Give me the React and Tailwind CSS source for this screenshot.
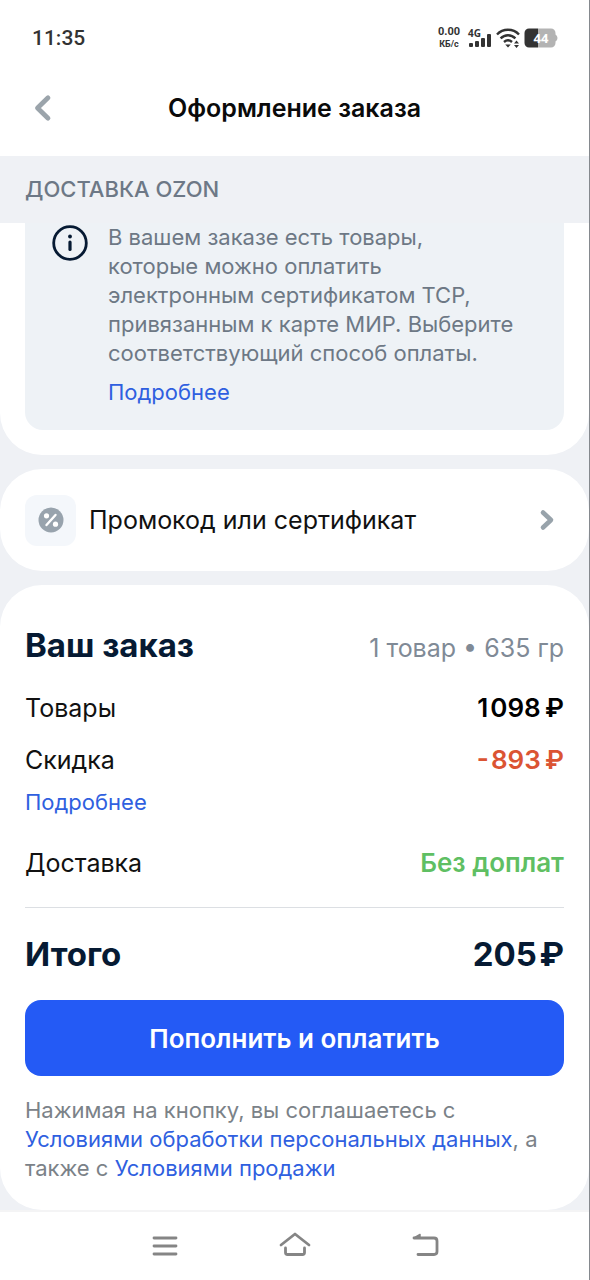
import React from "react";

function StatusBar() {
  return (
    <div className="flex h-[76px] items-center justify-between pl-8 pr-[31px] text-[#333]">
      <span className="font-['Roboto',sans-serif] text-[21px] font-medium leading-6">11:35</span>
      <div className="flex items-center gap-2">
        <div className="flex flex-col items-center font-['Roboto',sans-serif] font-bold leading-3">
          <span className="text-[11px]">0.00</span>
          <span className="text-[9px]">КБ/с</span>
        </div>
        <div className="relative h-5 w-6">
          <span className="absolute left-0 top-0 font-['Open_Sans',sans-serif] text-[10px] font-bold leading-[10px]">4G</span>
          <svg className="h-5 w-6" viewBox="0 0 24 20" fill="currentColor">
            <rect x="1" y="15" width="4" height="4" rx="1" />
            <rect x="7" y="13" width="4" height="6" rx="1" />
            <rect x="13" y="10" width="4" height="9" rx="1" />
            <rect x="19" y="6" width="4" height="13" rx="1" />
          </svg>
        </div>
        <svg className="-ml-1 h-5 w-6" viewBox="0 0 24 20" fill="none" stroke="currentColor" strokeWidth="2.4">
          <path d="M1 6.5C7 .2 17 .2 23 6.5" />
          <path d="M4.6 10.4c4.2-4.2 10.6-4.2 14.8 0" />
          <path d="M8 14c2.4-2.2 5.6-2.2 8 0" />
          <path d="M9.2 16.5h5.600L12 19.600z" fill="currentColor" stroke="none" />
          <path d="M18 15.500l2.500-3 2.500 3zM18 17l2.500 3 2.500-3z" fill="currentColor" stroke="none" />
        </svg>
        <div className="relative -ml-1 flex h-5 w-[34px] items-center justify-center">
          <svg className="absolute inset-0 h-5 w-[34px]" viewBox="0 0 34 20">
            <path d="M5 .5h9v19H5A4.500 4.500 0 0 1 .5 15V5A4.500 4.500 0 0 1 5 .5z" fill="#333" />
            <path d="M14 .5h13A4.500 4.500 0 0 1 31.500 5v1.500q2 1 2 3.500t-2 3.500V15a4.500 4.500 0 0 1-4.500 4.500H14z" fill="#b3b3b3" />
          </svg>
          <span className="relative font-['Open_Sans',sans-serif] text-[13px] font-bold leading-4 text-white">44</span>
        </div>
      </div>
    </div>
  );
}

function Header() {
  return (
    <header className="grid h-20 grid-cols-[64px_1fr_64px] items-start">
      <button type="button" aria-label="Назад" className="flex h-16 items-center justify-center pl-[22px]">
        <svg className="h-7 w-5" viewBox="0 0 20 28" fill="none" stroke="#9ba4ab" strokeWidth="4.8" strokeLinecap="round" strokeLinejoin="round">
          <path d="M15 3.800L4.500 14 15 24.200" />
        </svg>
      </button>
      <h1 className="text-center text-[25px] font-semibold leading-[64px] text-[#0a0a0a]">Оформление заказа</h1>
    </header>
  );
}

function Row({ label, children, className }) {
  return (
    <div className="flex items-center justify-between leading-8">
      <span className="text-[25px] text-[#111]">{label}</span>
      <span className={`text-[26px] font-semibold ${className}`}>{children}</span>
    </div>
  );
}

function Notice() {
  return (
    <section className="rounded-b-[42px] bg-white px-[25px] pb-[25px]">
      <div className="flex gap-5 rounded-b-[18px] bg-[#eef2f6] pb-[23px] pl-[27px] pr-8">
        <svg className="mt-0.5 h-9 w-9 shrink-0" viewBox="0 0 36 36" fill="none" stroke="#061a33">
          <circle cx="18" cy="18" r="16.300" strokeWidth="2.800" />
          <path d="M18 17v7.500" strokeWidth="3.200" strokeLinecap="round" />
          <circle cx="18" cy="11.500" r="1.900" fill="#061a33" stroke="none" />
        </svg>
        <div className="text-[22px] leading-[29px]">
          <p className="text-[#6d7885]">
            В вашем заказе есть товары,
            <br />
            которые можно оплатить
            <br />
            электронным сертификатом ТСР,
            <br />
            привязанным к карте МИР. Выберите
            <br />
            соответствующий способ оплаты.
          </p>
          <a href="#details" className="mt-[10px] block text-[#2f5fe0]">Подробнее</a>
        </div>
      </div>
    </section>
  );
}

function PromoCode() {
  return (
    <button type="button" className="flex h-[102px] w-full items-center rounded-[42px] bg-white px-[25px] text-left">
      <span className="flex h-[51px] w-[51px] items-center justify-center rounded-[12px] bg-[#f4f7fb]">
        <svg className="h-[26px] w-[26px]" viewBox="0 0 26 26">
          <circle cx="13" cy="13" r="12.500" fill="#98a3ad" />
          <path d="M8.500 18L17.500 8" stroke="#fff" strokeWidth="2.400" strokeLinecap="round" />
          <circle cx="8.500" cy="8.800" r="2.600" fill="#fff" />
          <circle cx="17.500" cy="17.200" r="2.600" fill="#fff" />
        </svg>
      </span>
      <span className="ml-[13px] flex-1 text-[25px] leading-8 text-[#111]">Промокод или сертификат</span>
      <svg className="mr-2 h-[22px] w-[18px]" viewBox="0 0 18 22" fill="none" stroke="#98a3ab" strokeWidth="4.600" strokeLinecap="round" strokeLinejoin="round">
        <path d="M5 3.500L13 11l-8 7.500" />
      </svg>
    </button>
  );
}

function OrderSummary() {
  return (
    <section className="rounded-[42px] bg-white px-[25px] pb-[27px] pt-10">
      <div className="flex items-baseline justify-between leading-10">
        <h2 className="text-[33px] font-bold text-[#061a33]">Ваш заказ</h2>
        <span className="text-[25px] text-[#808a96]">1 товар • 635 гр</span>
      </div>
      <div className="mt-6">
        <Row label="Товары" className="text-black">1&#8202;098&#8201;₽</Row>
      </div>
      <div className="mt-5">
        <Row label="Скидка" className="text-[#db5433]">-&#8202;893&#8201;₽</Row>
        <a href="#discount" className="mt-3 block text-[22px] leading-[29px] text-[#2f5fe0]">Подробнее</a>
      </div>
      <div className="mt-[30px] border-b border-[#dcdfe3] pb-7">
        <Row label="Доставка" className="text-[#5fbf63]">Без доплат</Row>
      </div>
      <div className="mt-[26px] flex items-baseline justify-between text-[33px] font-bold leading-10 text-[#061a33]">
        <span>Итого</span>
        <span>205&#8202;₽</span>
      </div>
      <button type="button" className="mt-[26px] h-[76px] w-full rounded-[16px] bg-[#245af5] text-[26px] font-semibold text-white">
        Пополнить и оплатить
      </button>
      <p className="mt-5 text-[22px] leading-[29px] text-[#7b8288]">
        Нажимая на кнопку, вы соглашаетесь с
        <br />
        <a href="#privacy" className="text-[#2f5fe0]">Условиями обработки персональных данных</a>, а
        <br />
        также с <a href="#terms" className="text-[#2f5fe0]">Условиями продажи</a>
      </p>
    </section>
  );
}

function NavBar() {
  return (
    <nav className="flex h-[70px] items-center justify-center gap-[94px] border-t-2 border-[#f4f4f5] bg-white text-[#858585]">
      <button type="button" aria-label="Недавние">
        <svg className="h-9 w-9" viewBox="0 0 36 36" fill="none" stroke="currentColor" strokeWidth="2.800" strokeLinecap="round">
          <path d="M7 10h22M7 18h22M7 26h22" />
        </svg>
      </button>
      <button type="button" aria-label="Домой">
        <svg className="h-9 w-9" viewBox="0 0 36 36" fill="none" stroke="currentColor" strokeWidth="2.800" strokeLinecap="round" strokeLinejoin="round">
          <path d="M4 17L18 6l14 11M8.500 20v4.500q0 2 2 2h15q2 0 2-2V20" />
        </svg>
      </button>
      <button type="button" aria-label="Назад">
        <svg className="h-9 w-9" viewBox="0 0 36 36" fill="none" stroke="currentColor" strokeWidth="2.800" strokeLinecap="round" strokeLinejoin="round">
          <path d="M7 10h20q3 0 3 3v10.500q0 3-3 3H11" />
          <path d="M7 10l6-3.500V10z" fill="currentColor" strokeWidth="1.500" />
        </svg>
      </button>
    </nav>
  );
}

export default function App() {
  return (
    <div className="flex min-h-screen flex-col border-r border-[#85898e] bg-[#eff1f5] font-['Inter',sans-serif]">
      <div className="bg-white">
        <StatusBar />
        <Header />
      </div>
      <main className="flex-1">
        <h2 className="px-[25px] text-[22px] font-medium leading-[67px] text-[#6d7886]">ДОСТАВКА OZON</h2>
        <div className="flex flex-col gap-[14px]">
          <Notice />
          <PromoCode />
          <OrderSummary />
        </div>
      </main>
      <NavBar />
    </div>
  );
}
